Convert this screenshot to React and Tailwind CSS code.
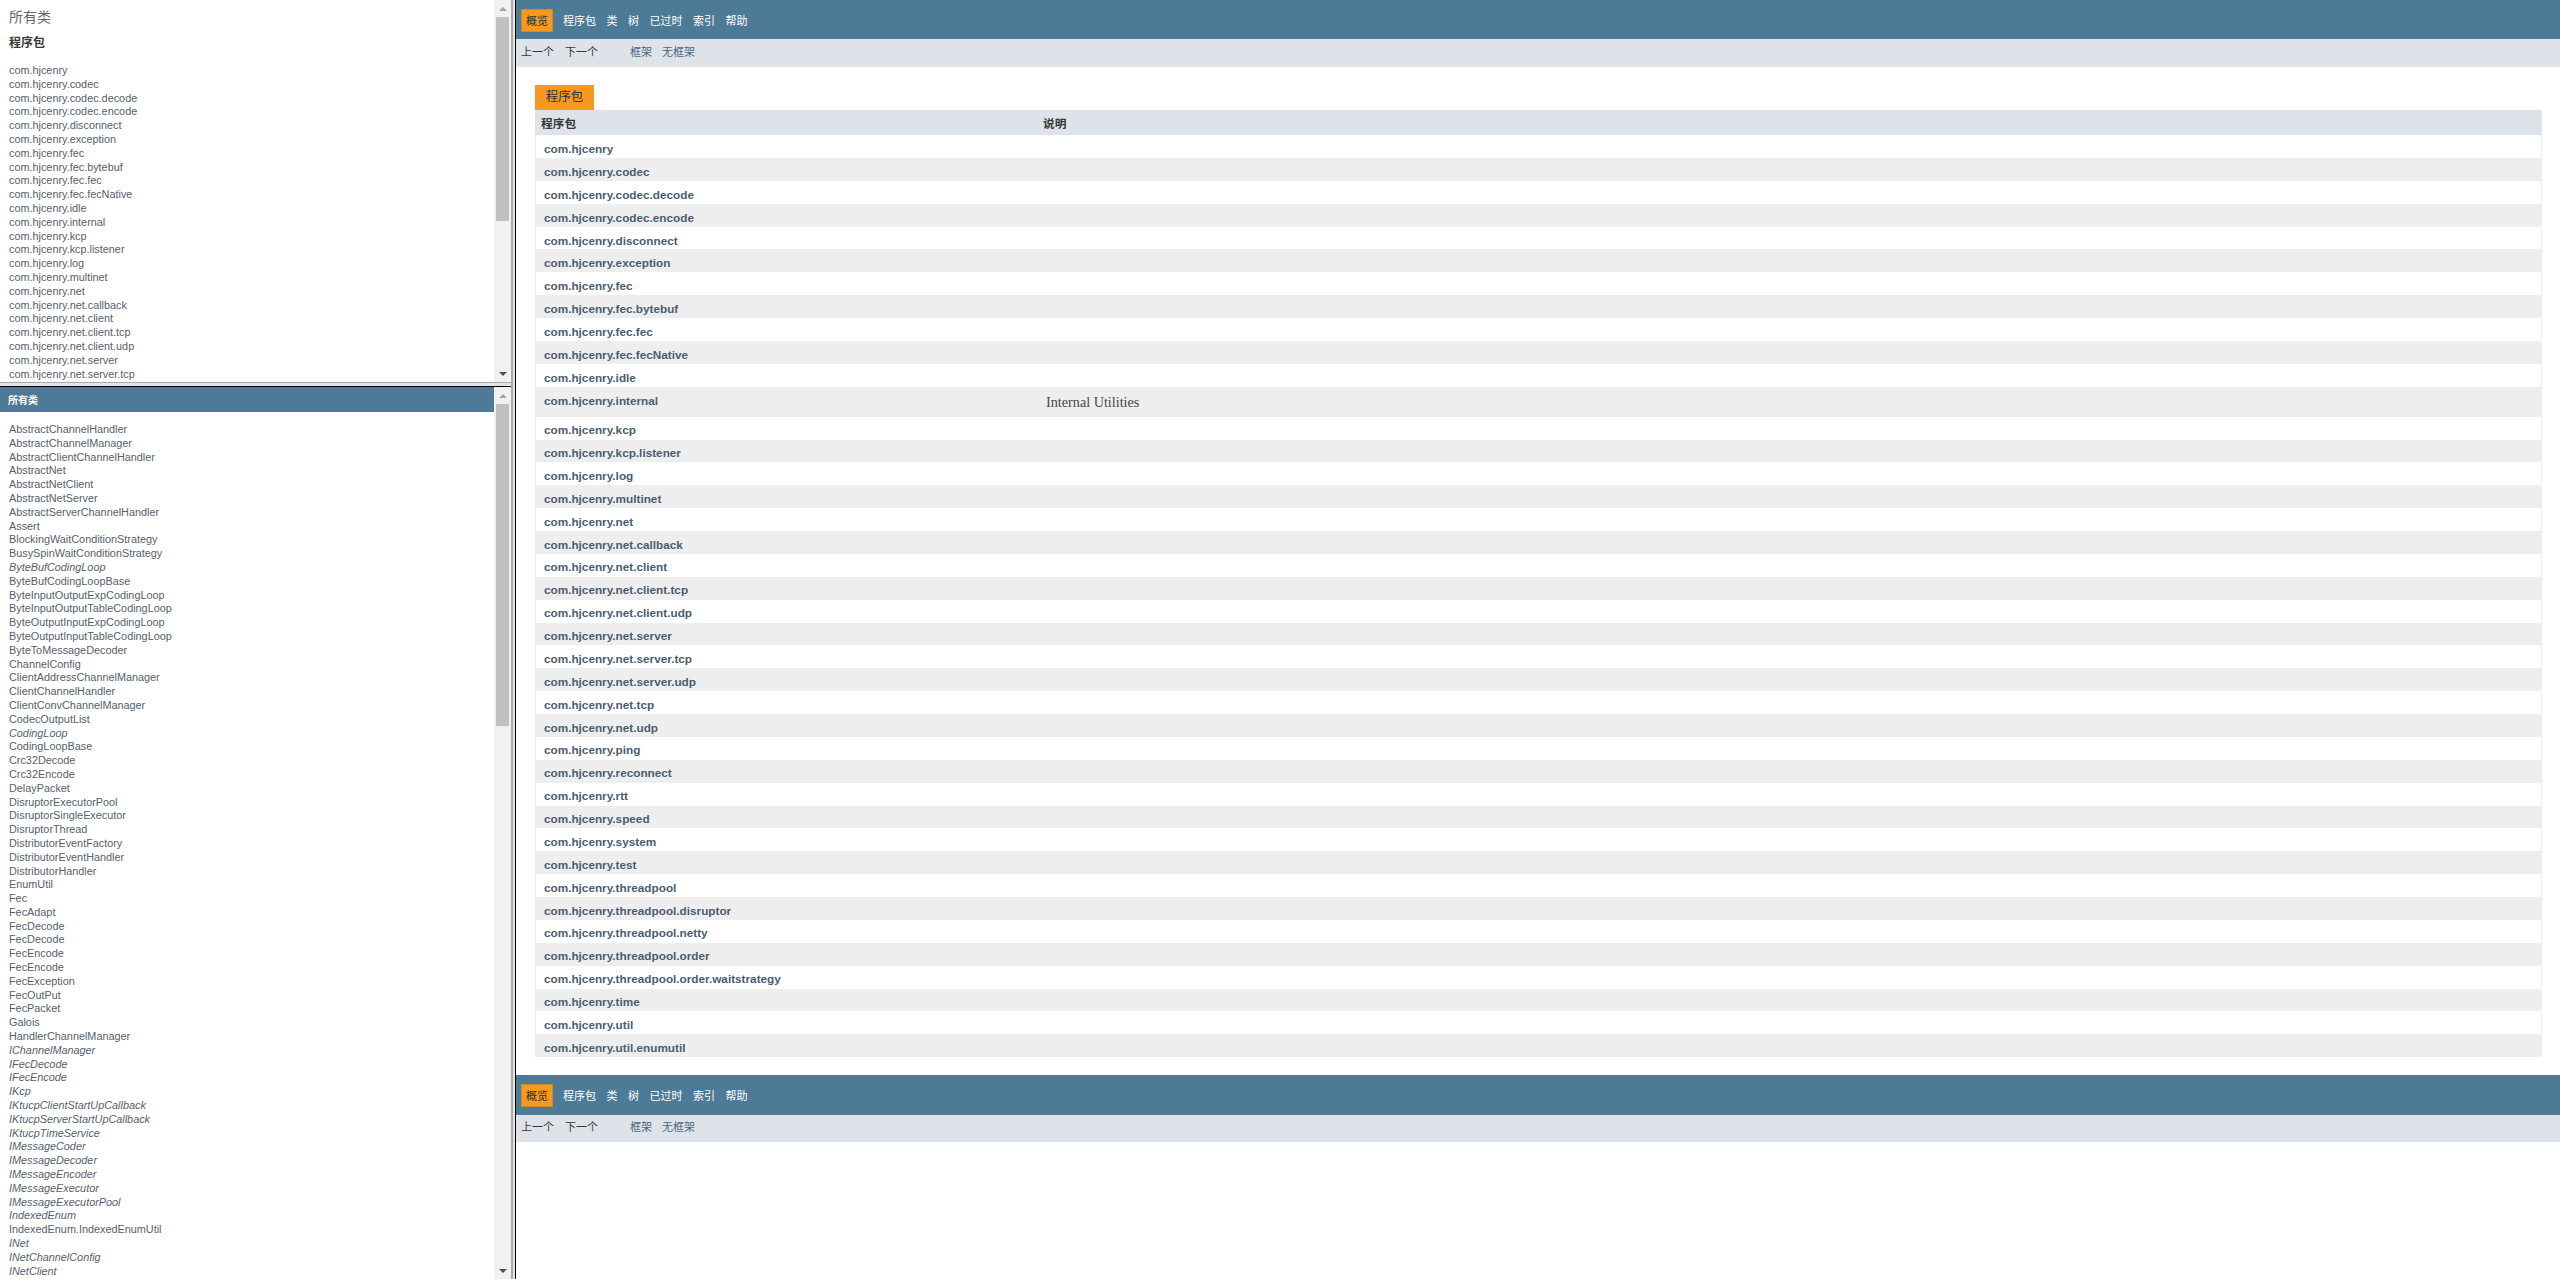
import React from "react";

const sans = '"Liberation Sans", "Noto Sans CJK SC", sans-serif';

const packages = ["com.hjcenry","com.hjcenry.codec","com.hjcenry.codec.decode","com.hjcenry.codec.encode","com.hjcenry.disconnect","com.hjcenry.exception","com.hjcenry.fec","com.hjcenry.fec.bytebuf","com.hjcenry.fec.fec","com.hjcenry.fec.fecNative","com.hjcenry.idle","com.hjcenry.internal","com.hjcenry.kcp","com.hjcenry.kcp.listener","com.hjcenry.log","com.hjcenry.multinet","com.hjcenry.net","com.hjcenry.net.callback","com.hjcenry.net.client","com.hjcenry.net.client.tcp","com.hjcenry.net.client.udp","com.hjcenry.net.server","com.hjcenry.net.server.tcp","com.hjcenry.net.server.udp","com.hjcenry.net.tcp","com.hjcenry.net.udp","com.hjcenry.ping","com.hjcenry.reconnect","com.hjcenry.rtt","com.hjcenry.speed","com.hjcenry.system","com.hjcenry.test","com.hjcenry.threadpool","com.hjcenry.threadpool.disruptor","com.hjcenry.threadpool.netty","com.hjcenry.threadpool.order","com.hjcenry.threadpool.order.waitstrategy","com.hjcenry.time","com.hjcenry.util","com.hjcenry.util.enumutil"];

const classes = ["AbstractChannelHandler","AbstractChannelManager","AbstractClientChannelHandler","AbstractNet","AbstractNetClient","AbstractNetServer","AbstractServerChannelHandler","Assert","BlockingWaitConditionStrategy","BusySpinWaitConditionStrategy","*ByteBufCodingLoop","ByteBufCodingLoopBase","ByteInputOutputExpCodingLoop","ByteInputOutputTableCodingLoop","ByteOutputInputExpCodingLoop","ByteOutputInputTableCodingLoop","ByteToMessageDecoder","ChannelConfig","ClientAddressChannelManager","ClientChannelHandler","ClientConvChannelManager","CodecOutputList","*CodingLoop","CodingLoopBase","Crc32Decode","Crc32Encode","DelayPacket","DisruptorExecutorPool","DisruptorSingleExecutor","DisruptorThread","DistributorEventFactory","DistributorEventHandler","DistributorHandler","EnumUtil","Fec","FecAdapt","FecDecode","FecDecode","FecEncode","FecEncode","FecException","FecOutPut","FecPacket","Galois","HandlerChannelManager","*IChannelManager","*IFecDecode","*IFecEncode","*IKcp","*IKtucpClientStartUpCallback","*IKtucpServerStartUpCallback","*IKtucpTimeService","*IMessageCoder","*IMessageDecoder","*IMessageEncoder","*IMessageExecutor","*IMessageExecutorPool","*IndexedEnum","IndexedEnum.IndexedEnumUtil","*INet","*INetChannelConfig","*INetClient"];

function Scrollbar({ thumb }) {
  return (
    <div className="w-[17px] shrink-0 h-full bg-[#f1f1f1] flex flex-col">
      <div className="h-[17px] shrink-0 flex items-center justify-center">
        <div className="w-0 h-0 border-x-[4px] border-x-transparent border-b-[4px] border-b-[#a3a3a3]" />
      </div>
      <div className="w-[13px] mx-[2px] bg-[#c1c1c1] shrink-0" style={{ height: thumb }} />
      <div className="flex-1" />
      <div className="h-[17px] shrink-0 flex items-center justify-center">
        <div className="w-0 h-0 border-x-[4px] border-x-transparent border-t-[4px] border-t-[#505050]" />
      </div>
    </div>
  );
}

function IndexList({ items }) {
  return (
    <ul className="pl-[9px] text-[10.85px] text-[#54616e] list-none">
      {items.map((t, i) => (
        <li key={i} className={`h-[13.8px] leading-[13.8px] whitespace-nowrap ${t[0] === "*" ? "italic" : ""}`}>
          {t.replace("*", "")}
        </li>
      ))}
    </ul>
  );
}

function NavBars({ height, subHeight }) {
  const items = ["程序包", "类", "树", "已过时", "索引", "帮助"];
  return (
    <div>
      <div className="bg-[#4d7a97] flex items-start pt-[9px] pl-[5px] text-[11px]" style={{ height }}>
        <div className="h-[23px] w-[32px] pt-[2px] bg-[#f8981d] text-[#253441] flex items-center justify-center border border-[#c98a35]">概览</div>
        <div className="flex gap-[10.5px] pl-[10px] pt-[2px] h-[23px] items-center text-white">
          {items.map((t) => (
            <span key={t}>{t}</span>
          ))}
        </div>
      </div>
      <div className="bg-[#dee3e9] flex items-center pl-[5px] pb-[2px] text-[11px]" style={{ height: subHeight }}>
        <span className="text-[#353833]">上一个</span>
        <span className="text-[#353833] ml-[11px]">下一个</span>
        <span className="text-[#4a6782] ml-[32px]">框架</span>
        <span className="text-[#4a6782] ml-[10px]">无框架</span>
      </div>
    </div>
  );
}

export default function App() {
  return (
    <div className="flex h-screen w-full overflow-hidden bg-white" style={{ fontFamily: sans }}>
      <div className="w-[511px] shrink-0 flex flex-col h-full">
        <div className="h-[382px] shrink-0 flex">
          <div className="flex-1 overflow-hidden pt-[10px]">
            <div className="pl-[9px] text-[14px] leading-[14px] text-[#666666]">所有类</div>
            <div className="pl-[9px] pt-[12px] pb-[14px] text-[12px] leading-[14px] font-bold text-[#353833]">程序包</div>
            <IndexList items={packages} />
          </div>
          <Scrollbar thumb={204} />
        </div>
        <div className="h-[5px] shrink-0 bg-[#e4e4e4] border-t border-t-[#a9a9a9] border-b border-b-black" />
        <div className="flex-1 flex min-h-0">
          <div className="flex-1 overflow-hidden">
            <div className="h-[25px] bg-[#4d7a97] text-white text-[10px] font-bold pl-[8px] pt-[2px] flex items-center">所有类</div>
            <div className="pt-[11px]">
              <IndexList items={classes} />
            </div>
          </div>
          <Scrollbar thumb={322} />
        </div>
      </div>
      <div className="w-[5px] shrink-0 h-full bg-[#e4e4e4] border-l-2 border-l-[#a9a9a9] border-r border-r-black" />
      <div className="flex-1 min-w-0 h-full overflow-hidden">
        <NavBars height={39} subHeight={28} />
        <div className="pt-[18px] pl-[19px] pr-[18px]">
          <div className="h-[25px] w-[59px] bg-[#f8981d] text-[#253441] text-[12.5px] flex items-center justify-center">程序包</div>
          <div className="h-[25px] pt-[3px] bg-[#dee3e9] flex items-center text-[11.7px] font-bold text-[#353833] pl-[6px]">
            <span className="w-[502px]">程序包</span>
            <span>说明</span>
          </div>
          <div className="border-x border-[#eeeeef]">
            {packages.map((p, i) => (
              <div
                key={p}
                className={`flex pl-[8px] text-[11.75px] font-bold text-[#4a5d70] ${i % 2 ? "bg-[#eeeeef]" : "bg-white"} ${p === "com.hjcenry.internal" ? "h-[30px]" : "h-[22.88px]"} ${i < 12 ? "pt-[7px]" : "pt-[6.5px]"} leading-[14px]`}
              >
                <span className="w-[502px] whitespace-nowrap">{p}</span>
                {p === "com.hjcenry.internal" && (
                  <span className="pt-[1px] text-[14.2px] font-normal text-[#474747]" style={{ fontFamily: '"Liberation Serif", serif' }}>
                    Internal Utilities
                  </span>
                )}
              </div>
            ))}
          </div>
        </div>
        <div className="mt-[18px]">
          <NavBars height={40} subHeight={27} />
        </div>
      </div>
    </div>
  );
}
